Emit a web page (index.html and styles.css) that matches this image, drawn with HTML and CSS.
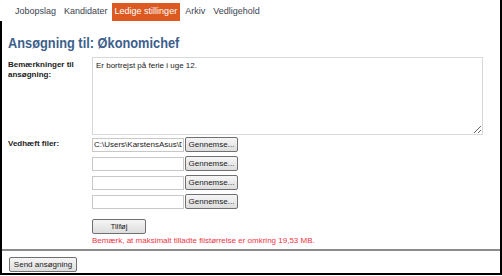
FILE: index.html
```html
<!DOCTYPE html>
<html lang="da">
<head>
  <meta charset="UTF-8" />
  <title>Ansøgning til: Økonomichef</title>
  <link rel="stylesheet" href="styles.css">
</head>
<body>
  <div class="page">
    <ul class="nav">
      <li>Jobopslag</li>
      <li>Kandidater</li>
      <li class="active">Ledige stillinger</li>
      <li>Arkiv</li>
      <li>Vedligehold</li>
    </ul>

    <div class="main">
      <h1>Ansøgning til: Økonomichef</h1>

      <div class="row">
        <label class="lbl">Bemærkninger til ansøgning:</label>
        <textarea class="notes">Er bortrejst på ferie i uge 12.</textarea>
      </div>

      <div class="row files">
        <label class="lbl">Vedhæft filer:</label>
        <div class="filelist">
          <div class="file"><input type="text" value="C:\Users\KarstensAsus\Desktop\cv.pdf" /><button>Gennemse...</button></div>
          <div class="file"><input type="text" /><button>Gennemse...</button></div>
          <div class="file"><input type="text" /><button>Gennemse...</button></div>
          <div class="file"><input type="text" /><button>Gennemse...</button></div>
          <button class="add">Tilføj</button>
          <div class="warn">Bemærk, at maksimalt tilladte filstørrelse er omkring 19,53 MB.</div>
        </div>
      </div>

      <div class="bottom">
        <button class="send">Send ansøgning</button>
      </div>
    </div>
  </div>
</body>
</html>
```

FILE: styles.css
```css
body { margin: 0; background: #fff; font-family: "Liberation Sans", Arial, sans-serif; }
.page {
  box-sizing: border-box;
  width: 502px;
  height: 275px;
  border-right: 2px solid #000;
  border-bottom: 2px solid #000;
  display: flex;
  flex-direction: column;
}
.nav {
  list-style: none;
  margin: 0;
  padding: 3px 0 0 11px;
  height: 18px;
  display: flex;
}
.nav li {
  padding: 0 4px;
  line-height: 16px;
  font-size: 9px;
  color: #3c4350;
}
.nav li.active { background: #dc5a1f; color: #fff; margin-right: 1px; padding: 0 3px; }
.main {
  flex: 1;
  border-left: 2px solid #000;
  padding: 0 0 0 6px;
}
h1 {
  margin: 13px 0 6px;
  font-size: 12.8px;
  line-height: 17px;
  color: #3d5f8c;
  transform: scaleY(1.2);
  transform-origin: left center;
}
.row { display: flex; }
.lbl {
  width: 84px;
  font-size: 8px;
  font-weight: bold;
  color: #222;
  line-height: 10px;
  padding-top: 3px;
}
.notes {
  box-sizing: border-box;
  width: 391px;
  height: 78px;
  margin: 0;
  padding: 3px 3px;
  border: 1px solid #d8d8d8;
  font-family: inherit;
  font-size: 8px;
  color: #222;
  resize: vertical;
}
.files { margin-top: 2px; }
.files .lbl { padding-top: 2px; }
.filelist { display: flex; flex-direction: column; align-items: flex-start; }
.file { display: flex; align-items: center; height: 15px; margin-bottom: 4px; }
.file input {
  box-sizing: border-box;
  width: 92px;
  height: 14px;
  margin: 0 1px 0 0;
  padding: 0 1px;
  border: 1px solid #c8c8c8;
  font-family: inherit;
  font-size: 8px;
  color: #222;
}
button {
  box-sizing: border-box;
  height: 15px;
  padding: 0 6px;
  border: 1px solid #707070;
  border-radius: 2px;
  background: linear-gradient(#f6f6f6, #dddddd);
  font-family: inherit;
  font-size: 8px;
  color: #222;
}
.file button { width: 53px; padding: 0; }
.add { width: 54px; margin-top: 6px; }
.warn { margin-top: 2px; font-size: 8px; line-height: 10px; color: #ee3344; }
.bottom {
  margin: 3px 0 0 -6px;
  border-top: 2px solid #8c8c8c;
  padding: 2px 0 0 7px;
}
.send { width: 68px; padding: 0; }
```
